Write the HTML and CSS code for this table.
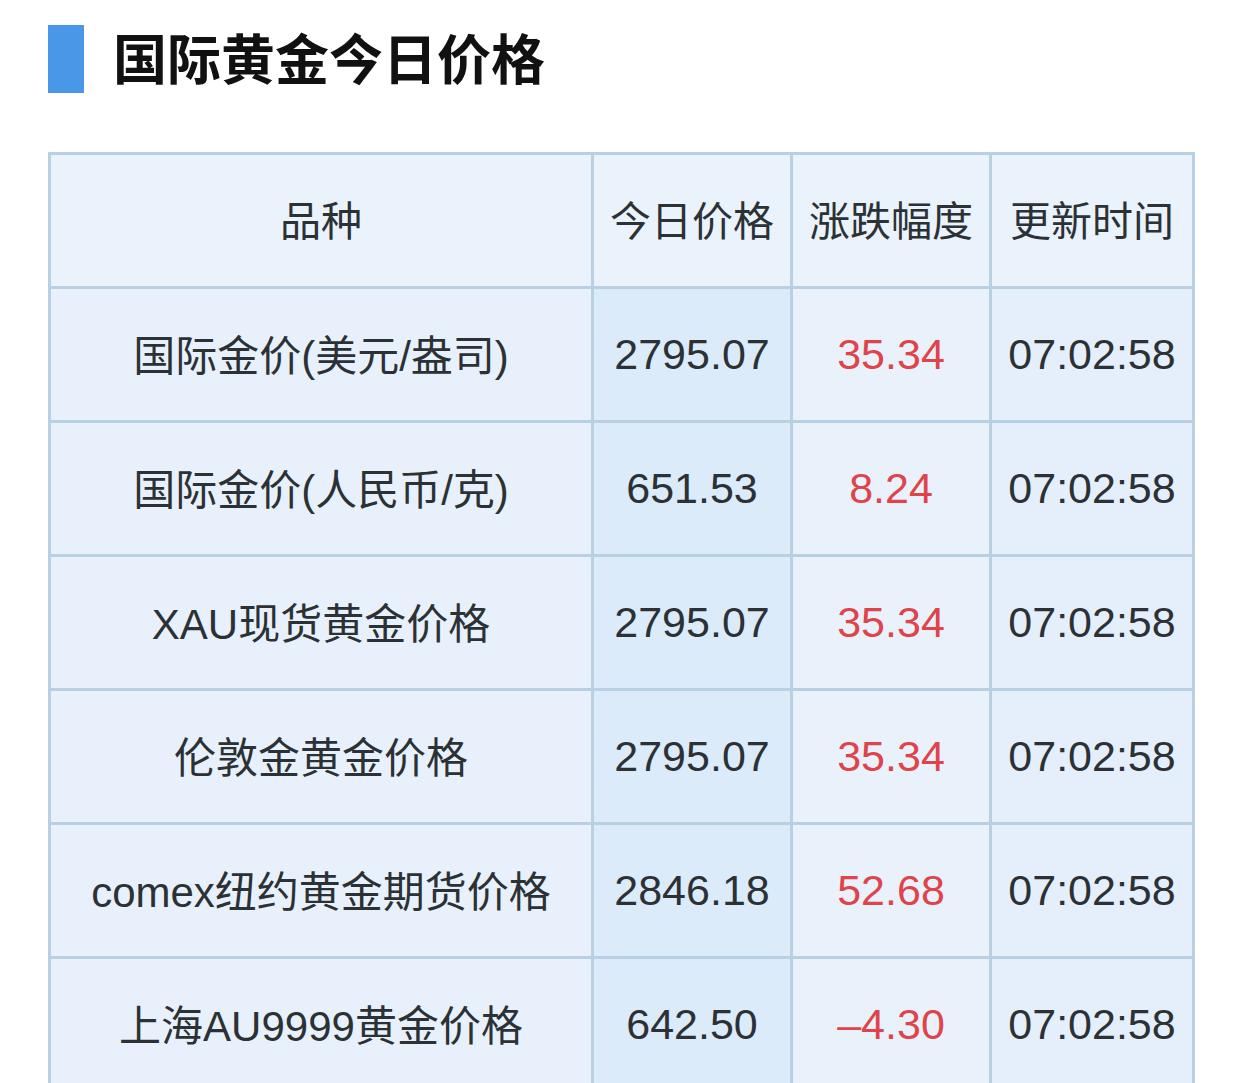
FILE: index.html
```html
<!DOCTYPE html>
<html lang="zh-CN">
<head>
<meta charset="utf-8">
<title>国际黄金今日价格</title>
<link rel="stylesheet" href="styles.css">
</head>
<body>
<div class="page">
  <div class="heading">
    <span class="bar"></span>
    <h1 class="title">国际黄金今日价格</h1>
  </div>
  <table class="prices">
    <colgroup>
      <col class="c1"><col class="c2"><col class="c3"><col class="c4">
    </colgroup>
    <thead>
      <tr><th>品种</th><th>今日价格</th><th>涨跌幅度</th><th>更新时间</th></tr>
    </thead>
    <tbody>
      <tr><td class="name">国际金价(美元/盎司)</td><td class="price">2795.07</td><td class="chg">35.34</td><td class="time">07:02:58</td></tr>
      <tr><td class="name">国际金价(人民币/克)</td><td class="price">651.53</td><td class="chg">8.24</td><td class="time">07:02:58</td></tr>
      <tr><td class="name">XAU现货黄金价格</td><td class="price">2795.07</td><td class="chg">35.34</td><td class="time">07:02:58</td></tr>
      <tr><td class="name">伦敦金黄金价格</td><td class="price">2795.07</td><td class="chg">35.34</td><td class="time">07:02:58</td></tr>
      <tr><td class="name">comex纽约黄金期货价格</td><td class="price">2846.18</td><td class="chg">52.68</td><td class="time">07:02:58</td></tr>
      <tr><td class="name">上海AU9999黄金价格</td><td class="price">642.50</td><td class="chg">–4.30</td><td class="time">07:02:58</td></tr>
    </tbody>
  </table>
</div>
</body>
</html>
```

FILE: styles.css
```css
html, body {
  margin: 0;
  padding: 0;
  background: #ffffff;
}
body {
  font-family: "Liberation Sans", "Noto Sans CJK SC", sans-serif;
  color: #2c3136;
}
.page {
  padding: 25px 0 0 48px;
}
.heading {
  display: flex;
  align-items: center;
  gap: 29px;
  height: 68px;
}
.bar {
  display: block;
  width: 36px;
  height: 68px;
  background: #4a97e8;
}
.title {
  margin: 0 0 4px;
  font-family: "Noto Sans CJK SC", sans-serif;
  font-size: 54px;
  font-weight: 700;
  color: #111111;
  line-height: 64px;
}
.prices {
  margin-top: 59px;
  border-collapse: collapse;
  table-layout: fixed;
  width: 1144px;
  border: 3px solid #b9d0e3;
}
.prices col.c1 { width: 543px; }
.prices col.c2 { width: 199px; }
.prices col.c3 { width: 199px; }
.prices col.c4 { width: 203px; }
.prices th,
.prices td {
  border: 3px solid #b9d0e3;
  height: 131px;
  padding: 0;
  text-align: center;
  vertical-align: middle;
  font-size: 43px;
  font-weight: 400;
  white-space: nowrap;
  color: #2c3136;
}
.prices th {
  background: #eaf2fb;
  font-family: "Noto Sans CJK SC", sans-serif;
  font-size: 41px;
  padding-bottom: 6px;
  height: 125px;
}
.prices td.name {
  background: #e8f1fb;
  font-size: 42px;
  padding-bottom: 4px;
  height: 127px;
}
.prices td.price { background: #dcebfa; }
.prices td.chg { background: #e9f2fb; color: #e0434a; }
.prices td.time { background: #e5effb; }
```
